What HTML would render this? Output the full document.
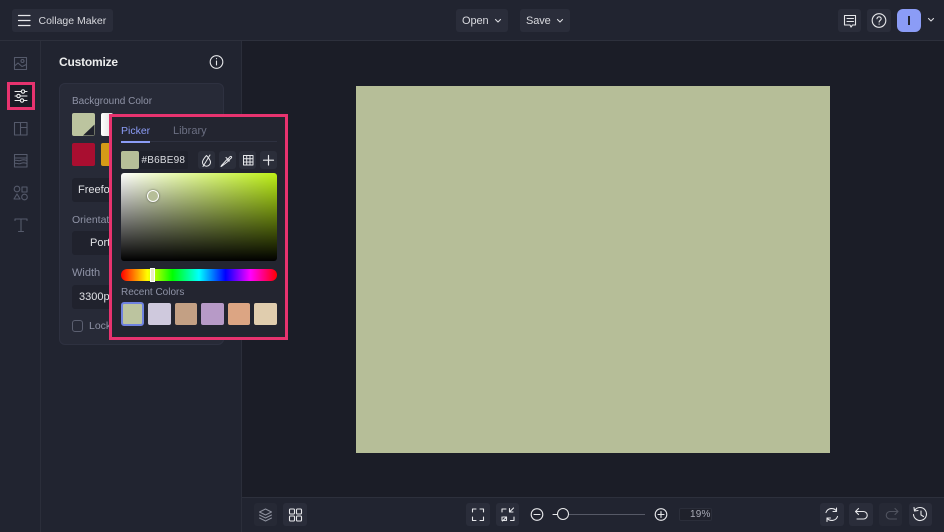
<!DOCTYPE html>
<html><head><meta charset="utf-8"><style>
*{box-sizing:border-box;margin:0;padding:0}
html,body{width:944px;height:532px;overflow:hidden;background:#1b1d27;font-family:"Liberation Sans",sans-serif}
.a{position:absolute}
.t{position:absolute;white-space:nowrap;line-height:14px}
.btn{position:absolute;background:#2a2d3a;border-radius:3px}
svg{position:absolute;overflow:visible;fill:none;stroke-linecap:round;stroke-linejoin:round}
.ss{left:0;top:0}
</style></head><body>
<!-- bars -->
<div class="a" style="left:0;top:0;width:944px;height:41px;background:#212430;border-bottom:1px solid #2d303c"></div>
<div class="a" style="left:0;top:41px;width:41px;height:491px;background:#212430;border-right:1px solid #2b2e3a"></div>
<div class="a" style="left:41px;top:41px;width:201px;height:491px;background:#212430;border-right:1px solid #2b2e3a"></div>
<div class="a" style="left:242px;top:497px;width:702px;height:35px;background:#212430;border-top:1px solid #2d303c"></div>
<!-- canvas -->
<div class="a" style="left:356px;top:86px;width:474px;height:367px;background:#b6be98"></div>
<!-- top left -->
<div class="btn" style="left:12px;top:9px;width:101px;height:23px"></div>
<svg class="ss" width="944" height="532" stroke="#e6e7ea" stroke-width="1.200">
<path d="M18.500 15.500H30M18.500 20.500H30M18.500 25.500H30"/>
</svg>
<div class="t" style="left:38.500px;top:13.500px;font-size:10.500px;color:#d8d9de">Collage Maker</div>
<!-- top center -->
<div class="btn" style="left:456px;top:9px;width:52px;height:23px"></div>
<div class="btn" style="left:520px;top:9px;width:50px;height:23px"></div>
<div class="t" style="left:462px;top:13.500px;font-size:11px;color:#d8d9de;letter-spacing:-.1px">Open</div>
<div class="t" style="left:526px;top:13.500px;font-size:11px;color:#d8d9de;letter-spacing:-.1px">Save</div>
<svg class="ss" width="944" height="532" stroke="#d8d9de" stroke-width="1.100">
<path d="M495.500 19.500l2.500 2.500 2.500-2.500M557.500 19.500l2.500 2.500 2.500-2.500M928.500 18.500l2.500 2.500 2.500-2.500"/>
</svg>
<!-- top right -->
<div class="btn" style="left:838px;top:9px;width:23px;height:23px"></div>
<div class="btn" style="left:867px;top:9px;width:24px;height:23px"></div>
<div class="a" style="left:897px;top:9px;width:24px;height:23px;background:#8b9cf6;border-radius:6px"></div>
<div class="a" style="left:908px;top:16px;width:1.500px;height:9px;background:#23252f"></div>
<svg class="ss" width="944" height="532" stroke="#e6e7ea" stroke-width="1.100">
<path d="M844.500 15.500h11v9.500h-3l-1.500 2-1-2h-5.500z"/>
<path d="M847 18.500h6.500M847 21.500h6.500"/>
<circle cx="879" cy="20.500" r="6.800"/>
<path d="M877 18.800c0-2.600 4.200-2.600 4.200 0 0 1.500-2.100 1.500-2.100 3.300M879.100 24v.2"/>
</svg>
<!-- left rail -->
<div class="a" style="left:7px;top:82px;width:28px;height:28px;background:#1a1c26;border:3px solid #e7336f"></div>
<svg class="ss" width="944" height="532" stroke="#555a6b" stroke-width="1.100">
<rect x="14.500" y="57.500" width="12" height="12"/><circle cx="22.500" cy="61" r="1.500"/><path d="M14.500 66l3.500-3 4 3.500 4.500-2"/>
<rect x="14.500" y="122.500" width="12.500" height="12.500"/><path d="M20.500 122.500V135M20.500 127.500H27"/>
<rect x="14.500" y="154.500" width="12.500" height="12.500"/><path d="M14.500 158h12.500M14.500 160.500c2-1 4 1 6 0s4-1 6.500 0M14.500 163.500c2-1 4 1 6 0s4-1 6.500 0"/>
<circle cx="17" cy="189" r="2.800"/><rect x="22" y="187" width="5" height="5"/><path d="M17 194l3 5h-6z"/><circle cx="24.500" cy="197" r="2.800"/>
<path d="M15 220.500v-1.500h12v1.500M21 219v12.500M18.500 231.500h5"/>
</svg>
<svg class="ss" width="944" height="532" stroke="#eceded" stroke-width="1.100">
<path d="M15 91.500h12M15 96h12M15 100.500h12"/>
<circle cx="23" cy="91.500" r="1.700" fill="#1a1c26"/><circle cx="18.500" cy="96" r="1.700" fill="#1a1c26"/><circle cx="22" cy="100.500" r="1.700" fill="#1a1c26"/>
</svg>
<!-- panel -->
<div class="t" style="left:59px;top:55px;font-size:12px;font-weight:bold;color:#eceded;letter-spacing:-.2px">Customize</div>
<svg class="ss" width="944" height="532" stroke="#e6e7ea" stroke-width="1.100">
<circle cx="216.500" cy="62" r="6.300"/><path d="M216.500 61v4M216.500 58.600v.2"/>
</svg>
<div class="a" style="left:59px;top:83px;width:165px;height:262px;background:#272a37;border:1px solid #2e3140;border-radius:6px"></div>
<div class="t" style="left:72px;top:95px;font-size:10px;color:#8f93a6">Background Color</div>
<div class="a" style="left:72px;top:113px;width:23px;height:23px;background:#bcc49f;border-radius:2px"></div>
<svg class="ss" width="944" height="532"><path d="M83 135.500l11.500-11v11z" style="fill:#20222c"/></svg>
<div class="a" style="left:101px;top:113px;width:12px;height:23px;background:linear-gradient(90deg,#fff,#ddd);border-radius:2px"></div>
<div class="a" style="left:72px;top:143px;width:23px;height:23px;background:#a90e30;border-radius:2px"></div>
<div class="a" style="left:101px;top:143px;width:12px;height:23px;background:#d59a17;border-radius:2px"></div>
<div class="a" style="left:72px;top:178px;width:40px;height:24px;background:#20222d;border-radius:3px"></div>
<div class="t" style="left:78px;top:183px;font-size:11px;color:#e0e1e5;width:31px;overflow:hidden">Freeform</div>
<div class="t" style="left:72px;top:213px;font-size:10.500px;color:#8f93a6;width:37px;overflow:hidden">Orientation</div>
<div class="a" style="left:72px;top:231px;width:40px;height:24px;background:#20222d;border-radius:3px"></div>
<div class="t" style="left:90px;top:236px;font-size:11px;color:#e0e1e5;width:19px;overflow:hidden">Portrait</div>
<div class="t" style="left:72px;top:266px;font-size:11px;color:#8f93a6">Width</div>
<div class="a" style="left:72px;top:285px;width:40px;height:24px;background:#20222d;border-radius:3px"></div>
<div class="t" style="left:79px;top:290px;font-size:11px;color:#e0e1e5;width:30px;overflow:hidden">3300px</div>
<div class="a" style="left:72px;top:320px;width:11px;height:12px;border:1px solid #5b5f70;border-radius:3px"></div>
<div class="t" style="left:89px;top:319px;font-size:10.500px;color:#8f93a6;width:20px;overflow:hidden">Lock</div>
<!-- popup -->
<div class="a" style="left:109px;top:114px;width:179px;height:226px;background:#232530;border:3px solid #e7336f"></div>
<div class="t" style="left:121px;top:124px;font-size:10.500px;color:#8b9cf6">Picker</div>
<div class="t" style="left:173px;top:124px;font-size:11px;color:#6b6f82">Library</div>
<div class="a" style="left:121px;top:141px;width:156px;height:1px;background:#2e3140"></div>
<div class="a" style="left:121px;top:141px;width:29px;height:2px;background:#8b9cf6"></div>
<div class="a" style="left:121px;top:151px;width:18px;height:18px;background:#b6be98;border-radius:2px"></div>
<div class="a" style="left:139px;top:151px;width:49px;height:18px;background:#1f212b;border-radius:0 2px 2px 0"></div>
<div class="t" style="left:141.500px;top:153.500px;font-size:10px;color:#dcdde2;letter-spacing:.2px">#B6BE98</div>
<div class="btn" style="left:198px;top:151px;width:17px;height:18px;background:#2b2e3a"></div>
<div class="btn" style="left:219px;top:151px;width:17px;height:18px;background:#2b2e3a"></div>
<div class="btn" style="left:239px;top:151px;width:17px;height:18px;background:#2b2e3a"></div>
<div class="btn" style="left:260px;top:151px;width:17px;height:18px;background:#2b2e3a"></div>
<svg class="ss" width="944" height="532" stroke="#e6e7ea" stroke-width="1">
<path d="M206.500 155.500c2.300 2.500 4 4.600 4 6.700a4 4 0 0 1-8 0c0-2.100 1.700-4.200 4-6.700zM203 166.500l7-11.500"/>
<path d="M222 166l-1 .5.500-1 5.500-6 1.500 1.500zM226 157.500l3.500 3.500M228 159l2-2.300c1-.9 2.200.3 1.300 1.300l-2.300 2"/>
<rect x="243.500" y="155.500" width="9.500" height="9.500"/><path d="M246.700 155.500V165M250 155.500V165M243.500 158.700H253M243.500 162H253"/>
<path d="M268.500 155.500v9.500M263.500 160.200h10" stroke-width="1.200"/>
</svg>
<!-- gradient -->
<div class="a" style="left:121px;top:173px;width:156px;height:88px;border-radius:3px;background:linear-gradient(to bottom,rgba(0,0,0,0),#000),linear-gradient(to right,#fff,#bdf016)"></div>
<div class="a" style="left:147px;top:190px;width:12px;height:12px;border-radius:50%;background:#b6be98;border:1.500px solid #fff;box-shadow:0 0 2px rgba(0,0,0,.5)"></div>
<div class="a" style="left:121px;top:269px;width:156px;height:12px;border-radius:6px;background:linear-gradient(to right,#f00 0%,#ff0 17%,#0f0 33%,#0ff 50%,#00f 67%,#f0f 83%,#f00 100%)"></div>
<div class="a" style="left:150px;top:268px;width:5px;height:14px;background:#ebedc8;border:1px solid #fff"></div>
<div class="t" style="left:121px;top:285.500px;font-size:10px;color:#8f93a6">Recent Colors</div>
<div class="a" style="left:121px;top:302px;width:23px;height:24px;background:#bcc49f;border:2px solid #6f82e0;border-radius:3px"></div>
<div class="a" style="left:148px;top:303px;width:23px;height:22px;background:#cfc9dd;border-radius:2px"></div>
<div class="a" style="left:175px;top:303px;width:22px;height:22px;background:#c3a084;border-radius:2px"></div>
<div class="a" style="left:201px;top:303px;width:23px;height:22px;background:#b79ac7;border-radius:2px"></div>
<div class="a" style="left:228px;top:303px;width:22px;height:22px;background:#dca583;border-radius:2px"></div>
<div class="a" style="left:254px;top:303px;width:23px;height:22px;background:#e0cdae;border-radius:2px"></div>
<!-- bottom bar -->
<div class="btn" style="left:254px;top:503px;width:23px;height:23px;background:#262935"></div>
<div class="btn" style="left:283px;top:503px;width:24px;height:23px"></div>
<div class="btn" style="left:466px;top:503px;width:24px;height:23px"></div>
<div class="btn" style="left:496px;top:503px;width:23px;height:23px"></div>
<div class="btn" style="left:820px;top:503px;width:24px;height:23px"></div>
<div class="btn" style="left:849px;top:503px;width:24px;height:23px"></div>
<div class="btn" style="left:879px;top:503px;width:23px;height:23px;background:#262935"></div>
<div class="btn" style="left:909px;top:503px;width:23px;height:23px"></div>
<div class="a" style="left:679px;top:508px;width:33px;height:13px;background:#1f212b;border:1px solid #2b2e3a;border-radius:2px"></div>
<div class="t" style="left:690px;top:508px;font-size:10px;color:#a9abb6;letter-spacing:.2px">19%</div>
<svg class="ss" width="944" height="532" stroke="#8d909d" stroke-width="1">
<path d="M265.500 509l6 3-6 3-6-3zM259.500 515l6 3 6-3M259.500 518l6 3 6-3"/>
</svg>
<svg class="ss" width="944" height="532" stroke="#e6e7ea" stroke-width="1.100">
<rect x="289.500" y="509" width="5" height="5" rx="1"/><rect x="296.500" y="509" width="5" height="5" rx="1"/><rect x="289.500" y="516" width="5" height="5" rx="1"/><rect x="296.500" y="516" width="5" height="5" rx="1"/>
<path d="M472.500 512v-3h3.500M480 509h3.500v3M483.500 517v3.500H480M476 520.500h-3.500V517"/>
<path d="M506 509h-4v3M502 517v3.500h3.500M514 517v3.500h-3.500M513.500 508l-4 4M509.500 508.500v3.500h3.500M502.500 521l4-4M503 517h3.500v3.500"/>
<circle cx="537" cy="514.500" r="5.800"/><path d="M534 514.500h6"/>
<circle cx="661" cy="514.500" r="5.800"/><path d="M658 514.500h6M661 511.500v6"/>
<path d="M553 514.500h5"/>
<path d="M826 512.500a6 6 0 0 1 10.500-1.500M837.500 516.500a6 6 0 0 1-10.500 1.500M836.500 508v3.500h-3.500M827 521.500V518h3.500"/>
<path d="M858.500 508.500l-3 3 3 3M855.500 511.500h8a3.700 3.700 0 0 1 0 7.500h-6.500"/>
<path d="M914.500 510.500a6.500 6.500 0 1 1-1 4M914 507.500l.5 3.500 3.500-.5M921 511v4l2.500 1.500"/>
</svg>
<svg class="ss" width="944" height="532" stroke="#50535f" stroke-width="1.100">
<path d="M895 508.500l3 3-3 3M898 511.500h-8a3.700 3.700 0 0 0 0 7.500h6.500"/>
</svg>
<div class="a" style="left:563px;top:514px;width:82px;height:1px;background:#565966"></div>
<div class="a" style="left:557px;top:508px;width:12px;height:12px;border-radius:50%;background:#212430;border:1.500px solid #eceded"></div>
</body></html>
